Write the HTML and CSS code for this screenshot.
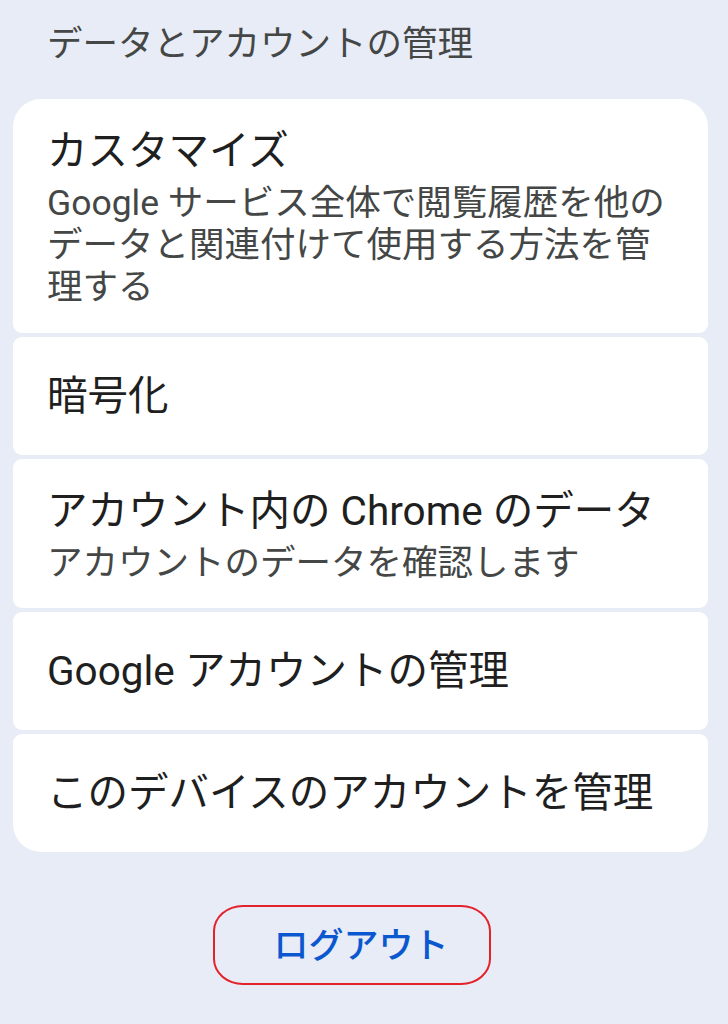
FILE: index.html
```html
<!DOCTYPE html>
<html lang="ja">
<head>
<meta charset="utf-8">
<title>データとアカウントの管理</title>
<link rel="stylesheet" href="styles.css">
</head>
<body>
<main class="page">
  <h2 class="section-title">データとアカウントの管理</h2>
  <div class="list">
    <div class="item item-first">
      <div class="item-title">カスタマイズ</div>
      <div class="item-sub">Google サービス全体で閲覧履歴を他のデータと関連付けて使用する方法を管理する</div>
    </div>
    <div class="item item-single">
      <div class="item-title">暗号化</div>
    </div>
    <div class="item">
      <div class="item-title">アカウント内の Chrome のデータ</div>
      <div class="item-sub">アカウントのデータを確認します</div>
    </div>
    <div class="item item-single">
      <div class="item-title">Google アカウントの管理</div>
    </div>
    <div class="item item-single item-last">
      <div class="item-title">このデバイスのアカウントを管理</div>
    </div>
  </div>
  <div class="logout-wrap">
    <button class="logout">ログアウト</button>
  </div>
</main>
</body>
</html>
```

FILE: styles.css
```css
html, body {
  margin: 0;
  padding: 0;
  background: #e8ecf6;
}

body {
  font-family: Roboto, "Noto Sans CJK JP", "Noto Sans", sans-serif;
  width: 728px;
  height: 1024px;
  overflow: hidden;
}

.page {
  padding: 20px 20px 0 13px;
}

.section-title {
  margin: 0 0 31px 34px;
  font-size: 35.5px;
  line-height: 48px;
  font-weight: 400;
  color: #444746;
}

.list {
  display: flex;
  flex-direction: column;
  gap: 4px;
}

.item {
  background: #ffffff;
  border-radius: 9px;
  padding: 28px 30px 24px 34px;
  display: flex;
  flex-direction: column;
}

.item-first {
  border-radius: 28px 28px 9px 9px;
}

.item-last {
  border-radius: 9px 9px 28px 28px;
}

.item-single {
  padding-top: 35px;
  padding-bottom: 35px;
}

.item-title {
  font-size: 40.5px;
  line-height: 48px;
  color: #1f1f1f;
}

.item-sub {
  margin-top: 7px;
  font-size: 35.5px;
  line-height: 42px;
  color: #444746;
}

.item-first .item-sub {
  padding-bottom: 1px;
}

.logout-wrap {
  display: flex;
  justify-content: center;
  margin-top: 53px;
}

.logout {
  font-family: Roboto, "Noto Sans CJK JP", "Noto Sans", sans-serif;
  font-size: 35px;
  line-height: 48px;
  font-weight: 500;
  color: #0b57d0;
  background: transparent;
  border: 2.5px solid #e3222b;
  border-radius: 30px / 26px;
  padding: 16px 40px 12px 58px;
  margin-left: -17px;
  cursor: pointer;
}
```
